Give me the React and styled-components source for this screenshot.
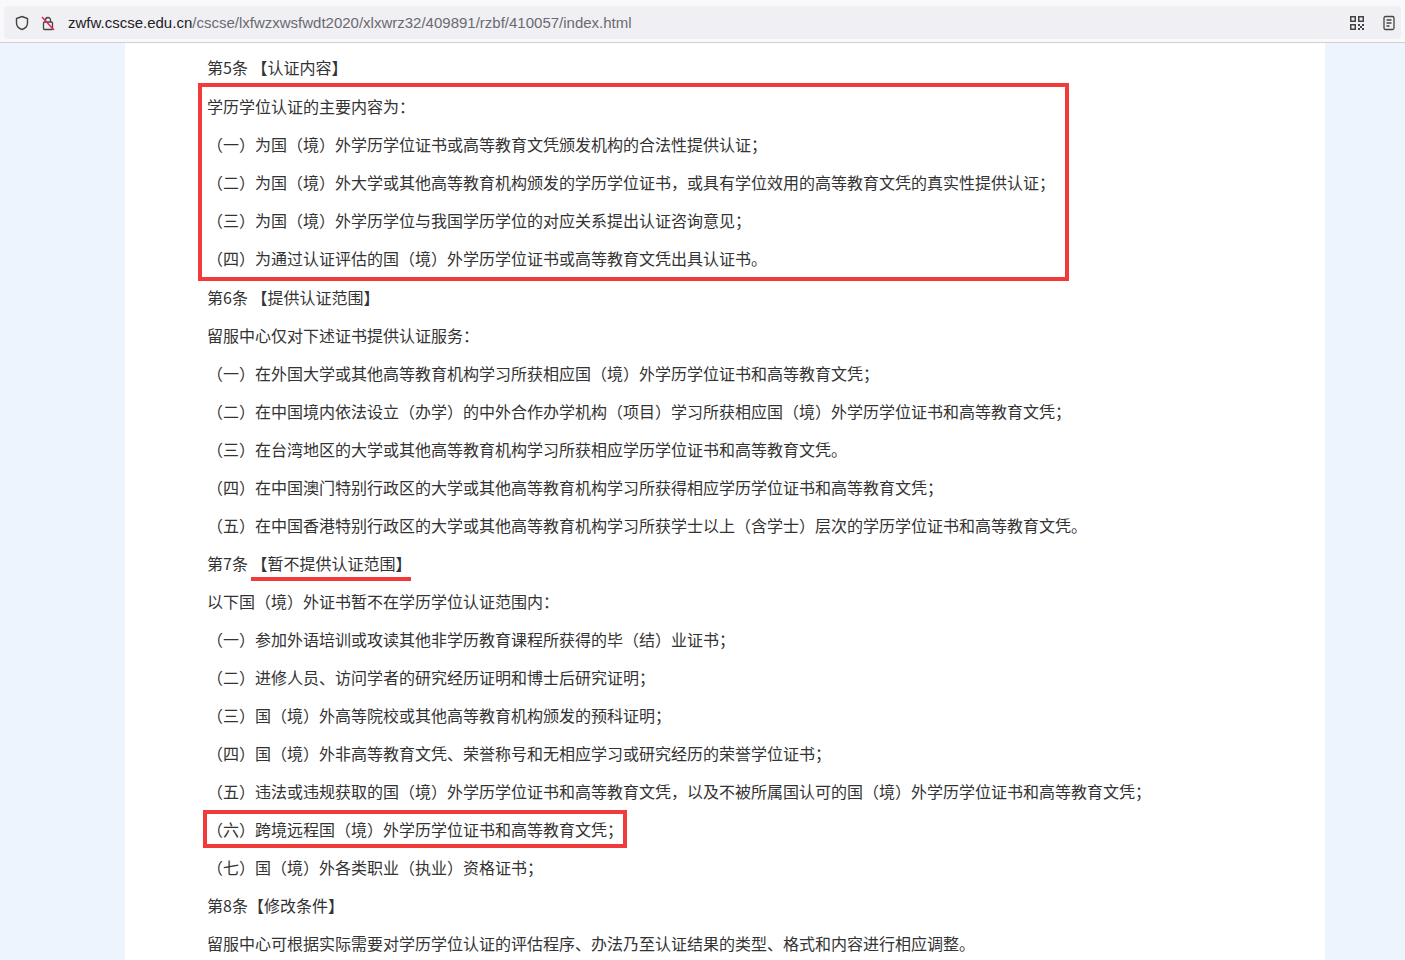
import React from "react";
import styled, { createGlobalStyle } from "styled-components";

const Global = createGlobalStyle`
  html, body { margin: 0; padding: 0; background: #edf4fd; }
  body { font-family: "Noto Sans CJK SC", "Noto Sans", sans-serif; }
`;

const Chrome = styled.div`
  background: #f9f9fb;
  padding: 6px 4px 3px 4px;
  border-bottom: 1px solid #cfcfd8;
`;
const UrlBar = styled.div`
  height: 33px;
  background: #f0f0f4;
  border-radius: 4px;
  display: flex;
  align-items: center;
  padding: 0 10px;
  gap: 10px;
  font-family: "Liberation Sans", "Noto Sans", sans-serif;
  font-size: 15px;
  color: #6a6a70;
`;
const Url = styled.span`
  flex: 1;
  margin-left: 2px;
  b { font-weight: normal; color: #222; }
`;
const Icon = styled.svg`
  width: 16px;
  height: 16px;
  flex: none;
`;

const Page = styled.div`
  width: 1200px;
  margin-left: 125px;
  background: #fff;
  min-height: 917px;
  padding: 5px 0 0 82px;
  box-sizing: border-box;
  color: #333;
  font-size: 16px;
`;
const Line = styled.div`
  line-height: 38px;
  height: 38px;
  white-space: nowrap;
`;
const BigBox = styled.div`
  border: 4px solid #f23a3a;
  width: 858px;
  margin: -3px 0 -3px -9px;
  padding-left: 5px;
`;
const SmallBox = styled.div`
  border: 4px solid #f23a3a;
  width: 416px;
  margin: 0 0 0 -4px;
  line-height: 30px;
  height: 30px;
  white-space: nowrap;
`;
const Under = styled.span`
  padding-bottom: 2px;
  border-bottom: 4px solid #f23a3a;
`;

export default function App() {
  return (
    <>
      <Global />
      <Chrome>
        <UrlBar>
          <Icon viewBox="0 0 16 16" fill="none" stroke="#444" strokeWidth="1.4">
            <path d="M8 1.5 L13.5 3.5 V8 C13.5 11 11 13.5 8 14.5 C5 13.5 2.5 11 2.5 8 V3.5 Z" />
          </Icon>
          <Icon viewBox="0 0 16 16" fill="none" stroke="#444" strokeWidth="1.3">
            <rect x="3.5" y="7" width="9" height="7.5" rx="1" />
            <path d="M5.5 7 V5 A2.5 2.5 0 0 1 10.5 5 V7" />
            <path d="M2 2 L14 15" stroke="#e22850" strokeWidth="1.5" />
          </Icon>
          <Url><b>zwfw.cscse.edu.cn</b>/cscse/lxfwzxwsfwdt2020/xlxwrz32/409891/rzbf/410057/index.html</Url>
          <Icon viewBox="0 0 16 16" fill="#444">
            <path d="M1 1h6v6H1zM2.5 2.5v3h3v-3zM9 1h6v6H9zM10.5 2.5v3h3v-3zM1 9h6v6H1zM2.5 10.5v3h3v-3z" fillRule="evenodd" />
            <rect x="9" y="9" width="2" height="2" /><rect x="13" y="9" width="2" height="2" /><rect x="11" y="11" width="2" height="2" /><rect x="9" y="13" width="2" height="2" /><rect x="13" y="13" width="2" height="2" />
          </Icon>
          <Icon viewBox="0 0 16 16" fill="none" stroke="#444" strokeWidth="1.3" style={{ marginLeft: 6, marginRight: -6 }}>
            <rect x="3" y="1.5" width="10" height="13" rx="1.5" />
            <path d="M5.5 5h5M5.5 8h5M5.5 11h3" />
          </Icon>
        </UrlBar>
      </Chrome>
      <Page>
        <Line>第5条 【认证内容】</Line>
        <BigBox>
          <Line>学历学位认证的主要内容为：</Line>
          <Line>（一）为国（境）外学历学位证书或高等教育文凭颁发机构的合法性提供认证；</Line>
          <Line>（二）为国（境）外大学或其他高等教育机构颁发的学历学位证书，或具有学位效用的高等教育文凭的真实性提供认证；</Line>
          <Line>（三）为国（境）外学历学位与我国学历学位的对应关系提出认证咨询意见；</Line>
          <Line>（四）为通过认证评估的国（境）外学历学位证书或高等教育文凭出具认证书。</Line>
        </BigBox>
        <Line>第6条 【提供认证范围】</Line>
        <Line>留服中心仅对下述证书提供认证服务：</Line>
        <Line>（一）在外国大学或其他高等教育机构学习所获相应国（境）外学历学位证书和高等教育文凭；</Line>
        <Line>（二）在中国境内依法设立（办学）的中外合作办学机构（项目）学习所获相应国（境）外学历学位证书和高等教育文凭；</Line>
        <Line>（三）在台湾地区的大学或其他高等教育机构学习所获相应学历学位证书和高等教育文凭。</Line>
        <Line>（四）在中国澳门特别行政区的大学或其他高等教育机构学习所获得相应学历学位证书和高等教育文凭；</Line>
        <Line>（五）在中国香港特别行政区的大学或其他高等教育机构学习所获学士以上（含学士）层次的学历学位证书和高等教育文凭。</Line>
        <Line>第7条 <Under>【暂不提供认证范围】</Under></Line>
        <Line>以下国（境）外证书暂不在学历学位认证范围内：</Line>
        <Line>（一）参加外语培训或攻读其他非学历教育课程所获得的毕（结）业证书；</Line>
        <Line>（二）进修人员、访问学者的研究经历证明和博士后研究证明；</Line>
        <Line>（三）国（境）外高等院校或其他高等教育机构颁发的预科证明；</Line>
        <Line>（四）国（境）外非高等教育文凭、荣誉称号和无相应学习或研究经历的荣誉学位证书；</Line>
        <Line>（五）违法或违规获取的国（境）外学历学位证书和高等教育文凭，以及不被所属国认可的国（境）外学历学位证书和高等教育文凭；</Line>
        <SmallBox>（六）跨境远程国（境）外学历学位证书和高等教育文凭；</SmallBox>
        <Line>（七）国（境）外各类职业（执业）资格证书；</Line>
        <Line>第8条【修改条件】</Line>
        <Line>留服中心可根据实际需要对学历学位认证的评估程序、办法乃至认证结果的类型、格式和内容进行相应调整。</Line>
      </Page>
    </>
  );
}
